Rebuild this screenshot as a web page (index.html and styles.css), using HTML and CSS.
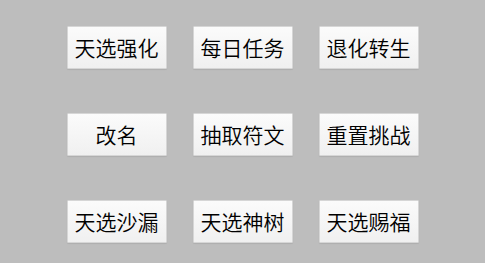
FILE: index.html
```html
<!DOCTYPE html>
<html lang="zh-CN">
<head>
    <meta charset="UTF-8">
    <meta name="viewport" content="width=device-width, initial-scale=1.0">
    <title>功能菜单</title>
    <link rel="stylesheet" href="styles.css">
</head>
<body>
    <div class="menu">
        <button class="menu-btn">天选强化</button>
        <button class="menu-btn">每日任务</button>
        <button class="menu-btn">退化转生</button>
        <button class="menu-btn">改名</button>
        <button class="menu-btn">抽取符文</button>
        <button class="menu-btn">重置挑战</button>
        <button class="menu-btn">天选沙漏</button>
        <button class="menu-btn">天选神树</button>
        <button class="menu-btn">天选赐福</button>
    </div>
</body>
</html>
```

FILE: styles.css
```css
html, body {
    margin: 0;
    height: 100%;
}

body {
    background-color: #bdbdbd;
    font-family: "Noto Sans CJK SC", "Noto Sans", sans-serif;
}

.menu {
    display: grid;
    grid-template-columns: repeat(3, 100px);
    grid-auto-rows: 43px;
    column-gap: 26px;
    row-gap: 44px;
    justify-content: center;
    padding-top: 26px;
}

.menu-btn {
    margin: 0;
    padding: 0 0 1px;
    border: 1px solid #d6d6d6;
    border-radius: 1px;
    background: linear-gradient(#fbfbfb, #f0f0f0);
    color: #000;
    font-family: inherit;
    font-size: 21px;
    font-weight: 350;
    line-height: 1;
    box-shadow: 0 1px 1px rgba(0, 0, 0, 0.08);
}
```
